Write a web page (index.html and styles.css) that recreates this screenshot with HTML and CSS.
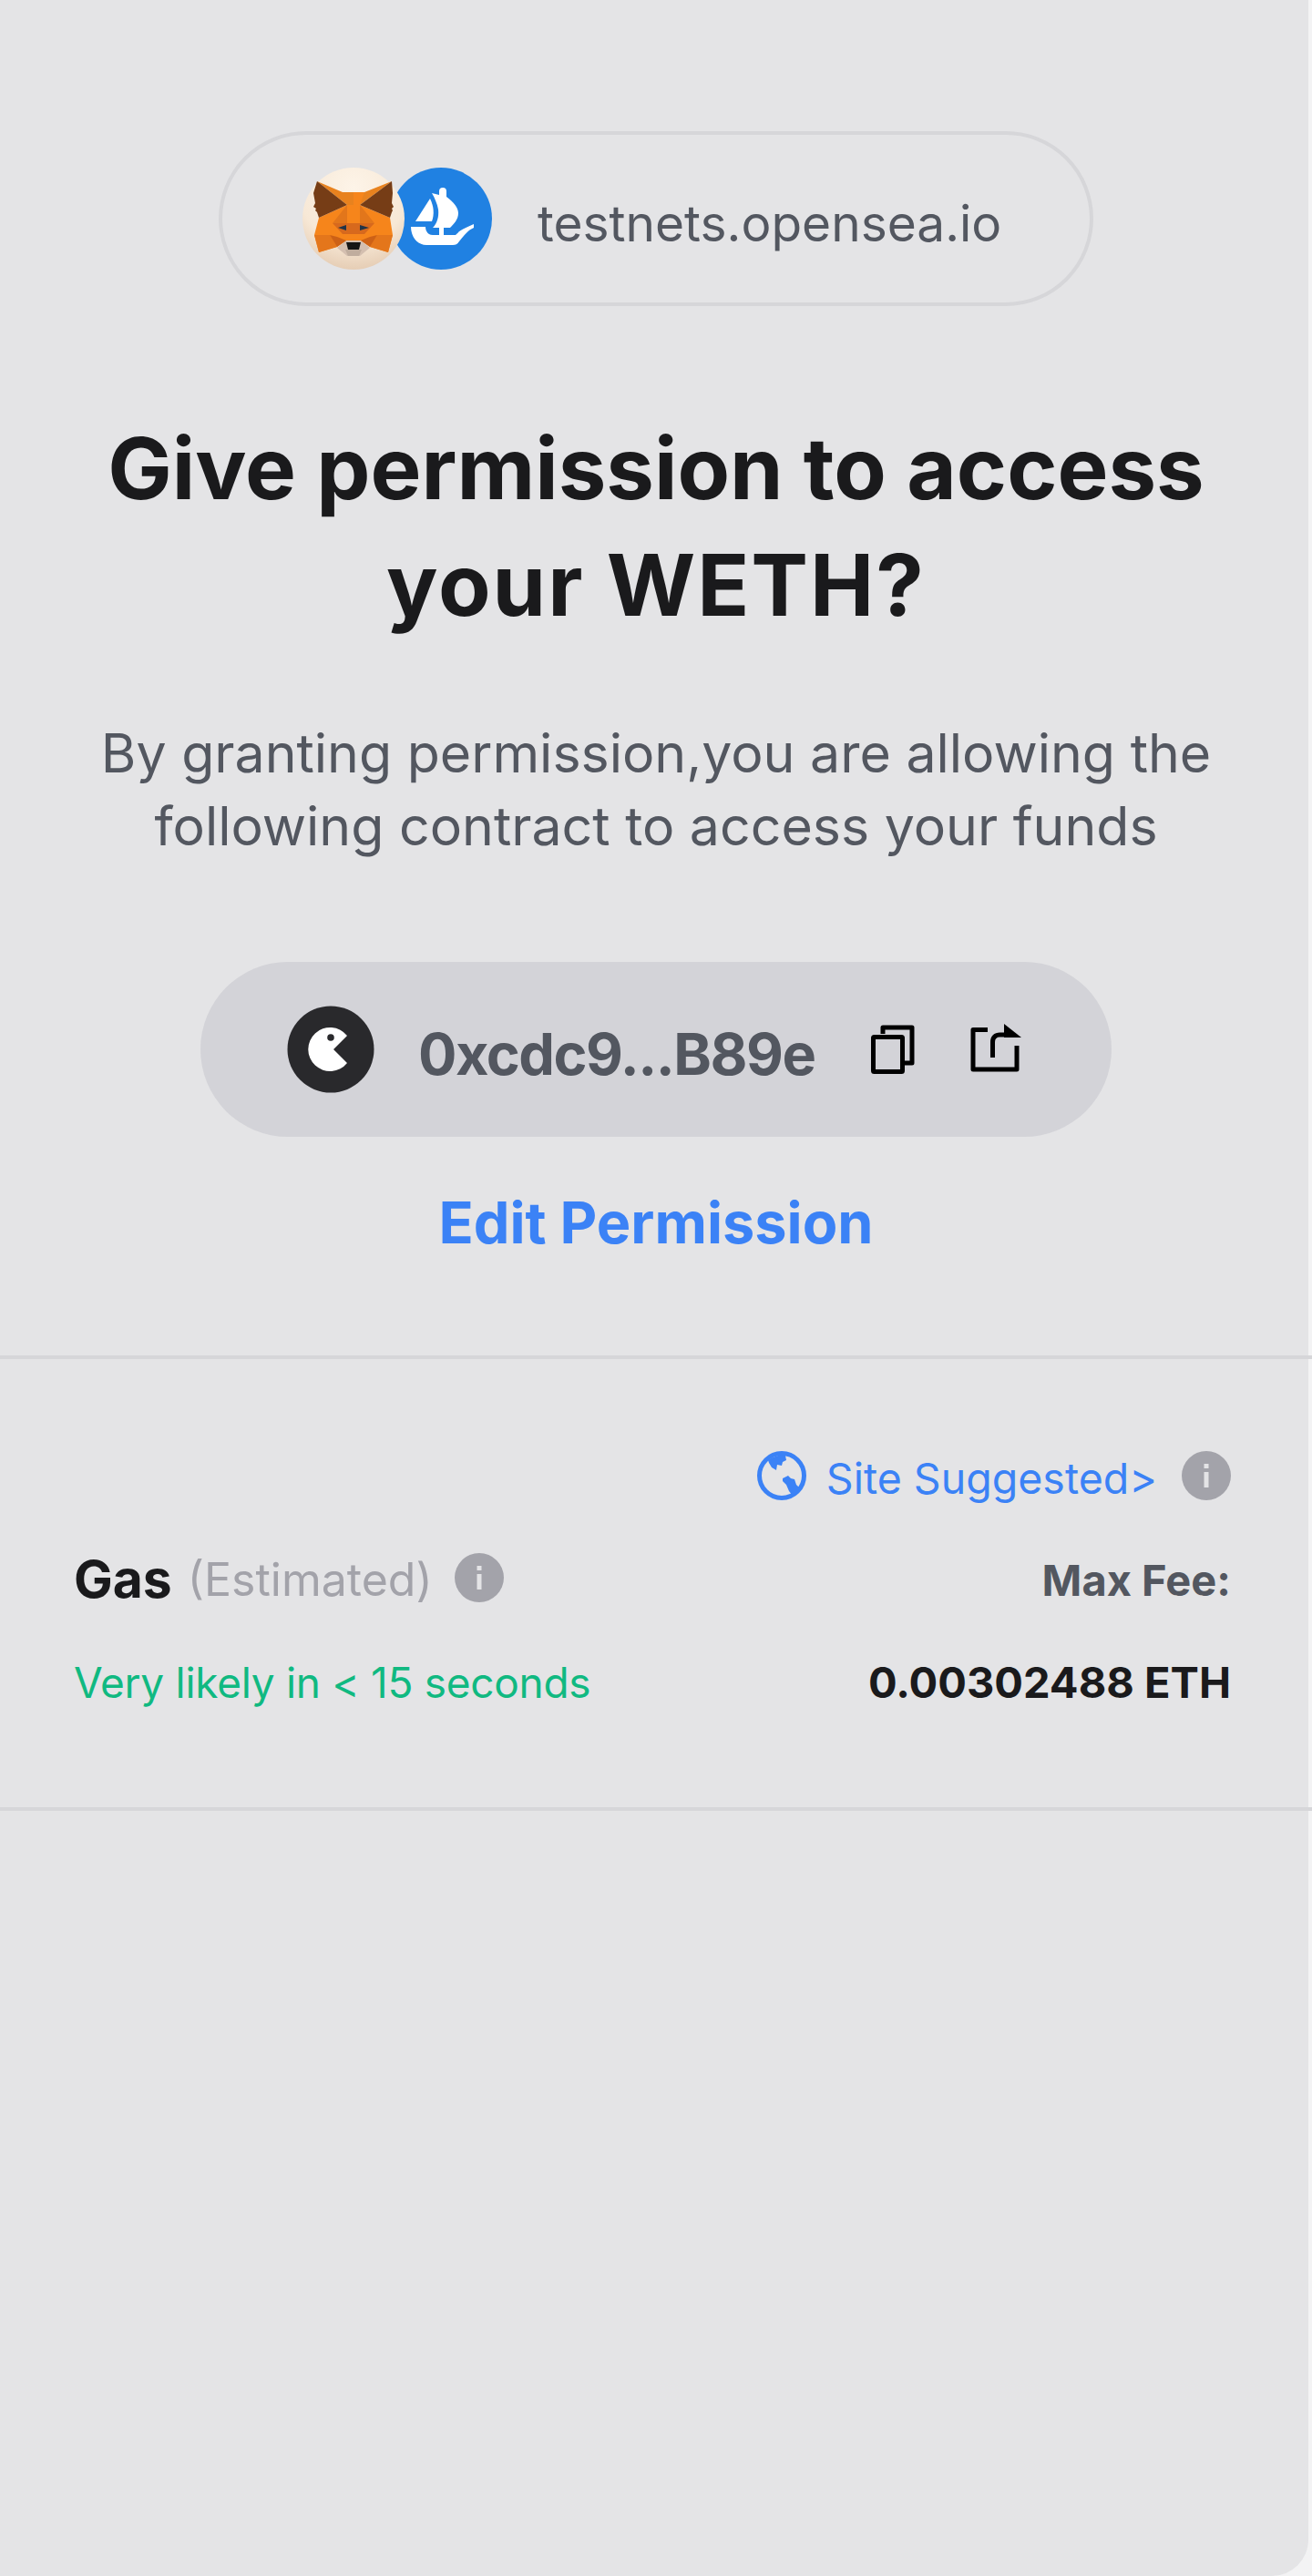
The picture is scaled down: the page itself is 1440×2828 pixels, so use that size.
FILE: index.html
```html
<!DOCTYPE html>
<html lang="en">
<head>
<meta charset="utf-8">
<title>Give permission</title>
<link rel="stylesheet" href="styles.css">
</head>
<body>
<main class="screen">
  <section class="top">
    <div class="site-pill">
      <div class="logos">
        <svg class="logo fox" viewBox="0 0 112 112" aria-hidden="true">
          <defs>
            <radialGradient id="foxbg" cx="50%" cy="20%" r="90%">
              <stop offset="0" stop-color="#fdf4e8"/>
              <stop offset="0.6" stop-color="#f7e8d6"/>
              <stop offset="1" stop-color="#dfc3a8"/>
            </radialGradient>
          </defs>
          <circle cx="56" cy="56" r="56" fill="url(#foxbg)"/>
          <polygon points="38,88 49,79 63,79 74,88 63,97 49,97" fill="#d4bfb0"/>
          <polygon points="47,90 65,90 62,97 50,97" fill="#c0ad9e"/>
          <polygon points="16,15 44,27 68,27 98,15 63,41 49,41" fill="#e8821e"/>
          <polygon points="49,41 63,41 96,55 99,74 94,93 74,87 64,80 48,80 38,87 18,93 13,74 18,55" fill="#f6851b"/>
          <polygon points="56,27 68,27 63,41 56,41" fill="#f6851b"/>
          <polygon points="16,15 49,41 18,55 16,49 14,47 15,45 12,43 14,39 12,28" fill="#763d16"/>
          <polygon points="98,15 63,41 96,55 98,49 99,47 98,45 100,43 98,39 99,28" fill="#763d16"/>
          <polygon points="33,61 49,41 49,61" fill="#e2761b"/>
          <polygon points="79,61 63,41 63,61" fill="#e2761b"/>
          <polygon points="33,61 79,61 68,73 44,73" fill="#d7691d"/>
          <polygon points="44,73 68,73 64,80 48,80" fill="#f6851b"/>
          <polygon points="39,66 48,63 48,69" fill="#233447"/>
          <polygon points="73,66 63,63 63,69" fill="#233447"/>
          <polygon points="13,74 30,74 38,87 18,93" fill="#e4761b"/>
          <polygon points="99,74 82,74 74,87 94,93" fill="#e4761b"/>
          <polygon points="30,74 38,87 48,80 38,76" fill="#cd6116"/>
          <polygon points="82,74 74,87 64,80 74,76" fill="#cd6116"/>
          <polygon points="48,82 64,82 62,90 50,90" fill="#161616"/>
        </svg>
        <svg class="logo ship" viewBox="0 0 112 112" aria-hidden="true">
          <circle cx="56" cy="56" r="56" fill="#2081e2"/>
          <path fill="#fff" d="M28 59 44 34C48 42 49 51 46 59Z"/>
          <path fill="#fff" d="M46 28 54 30V26a4 4 0 0 1 8 0V32C70 38 75 44 75 50C75 57 70 62 66 66H59V75H54V66H47C51 62 54 55 53 46C52 40 49 33 46 28Z"/>
          <path fill="#fff" d="M23 65H39C39 70 42 74 47 74H72C76 70 78 68 92 62V66C85 69 80 76 76 81C74 84 72 85 69 85H40C30 85 23 76 23 65Z"/>
        </svg>
      </div>
      <span class="site-name">testnets.opensea.io</span>
    </div>
    <h1 class="title">Give permission to access<br><span class="title-second">your WETH?</span></h1>
    <p class="lead">By granting permission,you are allowing the<br>following contract to access your funds</p>
    <div class="contract-pill">
      <svg class="avatar" viewBox="0 0 96 96" aria-hidden="true">
        <circle cx="48" cy="48" r="47.500" fill="#29292c"/>
        <path fill="#fff" d="M66 33A24 24 0 1 0 66 63L51 48Z"/>
        <circle cx="48" cy="35" r="3.800" fill="#29292c"/>
      </svg>
      <span class="address">0xcdc9...B89e</span>
      <svg class="copy-icon" viewBox="0 0 48 54" aria-hidden="true">
        <path fill="none" stroke="#000" stroke-width="5" stroke-linejoin="round" d="M13 10V3h32v39h-10"/>
        <rect x="2.500" y="13.500" width="32" height="38" rx="1" fill="none" stroke="#000" stroke-width="5" stroke-linejoin="round"/>
      </svg>
      <svg class="share-icon" viewBox="0 0 56 53" aria-hidden="true">
        <path fill="none" stroke="#000" stroke-width="5" stroke-linejoin="round" d="M19 6.500H3v43.500h48V24"/>
        <path fill="none" stroke="#000" stroke-width="5" d="M24.500 37V20c0-5 3-8 8-8h6"/>
        <path fill="#000" d="M37 0l19 15H37z"/>
      </svg>
    </div>
    <a class="edit-link">Edit Permission</a>
  </section>
  <section class="gas">
    <div class="suggest-row">
      <svg class="globe" viewBox="0 0 54 54" aria-hidden="true">
        <circle cx="27" cy="27" r="24.500" fill="none" stroke="#3b82f6" stroke-width="5"/>
        <path fill="#3b82f6" d="M12 10c5-4 12-6 19-5l1 5-4 2-1 4-5-1-1 6-5-3-3-5z"/>
        <path fill="#3b82f6" d="M28 30l6-3 3 3 4 1 2 6c2 2 3 3 4 3-2 5-5 8-8 9l-4-5-3-7-4-4z"/>
      </svg>
      <span class="suggest-text">Site Suggested&gt;</span>
      <svg class="info" viewBox="0 0 54 54" aria-hidden="true">
        <circle cx="27" cy="27" r="27" fill="#a3a3aa"/>
        <rect x="24.500" y="14" width="5" height="5" fill="#e4e4e6"/>
        <rect x="24.500" y="23" width="5" height="17" fill="#e4e4e6"/>
      </svg>
    </div>
    <div class="gas-row">
      <div class="gas-label">
        <span class="gas-name">Gas</span>
        <span class="gas-est">(Estimated)</span>
        <svg class="info" viewBox="0 0 54 54" aria-hidden="true">
          <circle cx="27" cy="27" r="27" fill="#a3a3aa"/>
          <rect x="24.500" y="14" width="5" height="5" fill="#e4e4e6"/>
          <rect x="24.500" y="23" width="5" height="17" fill="#e4e4e6"/>
        </svg>
      </div>
      <span class="max-fee">Max Fee:</span>
    </div>
    <div class="eta-row">
      <span class="eta">Very likely in &lt; 15 seconds</span>
      <span class="amount">0.00302488 ETH</span>
    </div>
  </section>
</main>
</body>
</html>
```

FILE: styles.css
```css
html, body {
  margin: 0;
  padding: 0;
  background: #f3f3f4;
}
.screen {
  width: 1436px;
  height: 2828px;
  box-sizing: border-box;
  background: #e4e4e6;
  border-radius: 0 0 40px 0;
  font-family: Inter, "Noto Sans", sans-serif;
}
.top {
  display: flex;
  flex-direction: column;
  align-items: center;
  padding-top: 144px;
  margin-right: -4px;
  height: 1492px;
  box-sizing: border-box;
  border-bottom: 4px solid #d6d6d9;
}
.site-pill {
  width: 960px;
  height: 192px;
  box-sizing: border-box;
  border: 4px solid #d6d6d9;
  border-radius: 96px;
  display: flex;
  align-items: center;
  padding-left: 88px;
  flex: none;
}
.logos {
  display: flex;
}
.logo {
  width: 112px;
  height: 112px;
  display: block;
}
.fox {
  position: relative;
  z-index: 1;
}
.ship {
  margin-left: -16px;
}
.site-name {
  margin-left: 50px;
  padding-top: 10px;
  font-size: 55px;
  color: #535760;
  line-height: 64px;
}
.title {
  margin: 114px 0 0;
  font-size: 94px;
  line-height: 128px;
  font-weight: 700;
  color: #1a1a1c;
  text-align: center;
}
.title-second {
  letter-spacing: 2px;
}
.lead {
  margin: 81px 0 0;
  font-size: 59px;
  line-height: 80px;
  color: #535760;
  text-align: center;
}
.contract-pill {
  margin-top: 109px;
  width: 1000px;
  height: 192px;
  border-radius: 96px;
  background: #d3d3d8;
  display: flex;
  align-items: center;
  padding-left: 95px;
  box-sizing: border-box;
  flex: none;
}
.avatar {
  width: 96px;
  height: 96px;
}
.address {
  margin-left: 48px;
  padding-top: 10px;
  font-size: 63px;
  letter-spacing: -1.500px;
  font-weight: 700;
  color: #535760;
  line-height: 80px;
  width: 497px;
  white-space: nowrap;
}
.copy-icon {
  width: 48px;
  height: 54px;
}
.share-icon {
  width: 56px;
  height: 53px;
  margin-left: 61px;
  margin-bottom: 3px;
}
.edit-link {
  margin-top: 50px;
  font-size: 63px;
  line-height: 88px;
  font-weight: 700;
  color: #3b82f6;
}
.gas {
  padding: 100px 89px 0 81px;
  height: 496px;
  box-sizing: border-box;
  border-bottom: 4px solid #d6d6d9;
  margin-right: -4px;
}
.suggest-row {
  display: flex;
  justify-content: flex-end;
  align-items: center;
  height: 56px;
}
.info {
  width: 54px;
  height: 54px;
  flex: none;
}
.globe {
  width: 54px;
  height: 54px;
}
.suggest-text {
  margin: 0 27px 0 22px;
  padding-top: 6px;
  font-size: 46.500px;
  line-height: 60px;
  color: #3b82f6;
}
.gas-row {
  margin-top: 56px;
  display: flex;
  justify-content: space-between;
  align-items: center;
  height: 56px;
}
.gas-label {
  display: flex;
  align-items: center;
}
.gas-name {
  padding-top: 4px;
  font-size: 57px;
  font-weight: 700;
  color: #1a1a1c;
  line-height: 64px;
}
.gas-est {
  margin: 0 24px 0 17px;
  padding-top: 4px;
  font-size: 50px;
  color: #a3a3aa;
  line-height: 64px;
}
.max-fee {
  padding-top: 6px;
  font-size: 47px;
  font-weight: 700;
  color: #535760;
  line-height: 64px;
}
.eta-row {
  margin-top: 56px;
  display: flex;
  justify-content: space-between;
  align-items: center;
  height: 56px;
}
.eta {
  padding-top: 6px;
  font-size: 46px;
  letter-spacing: -0.300px;
  color: #10b981;
  line-height: 64px;
}
.amount {
  padding-top: 6px;
  font-size: 47px;
  font-weight: 700;
  color: #1a1a1c;
  line-height: 64px;
}
```
